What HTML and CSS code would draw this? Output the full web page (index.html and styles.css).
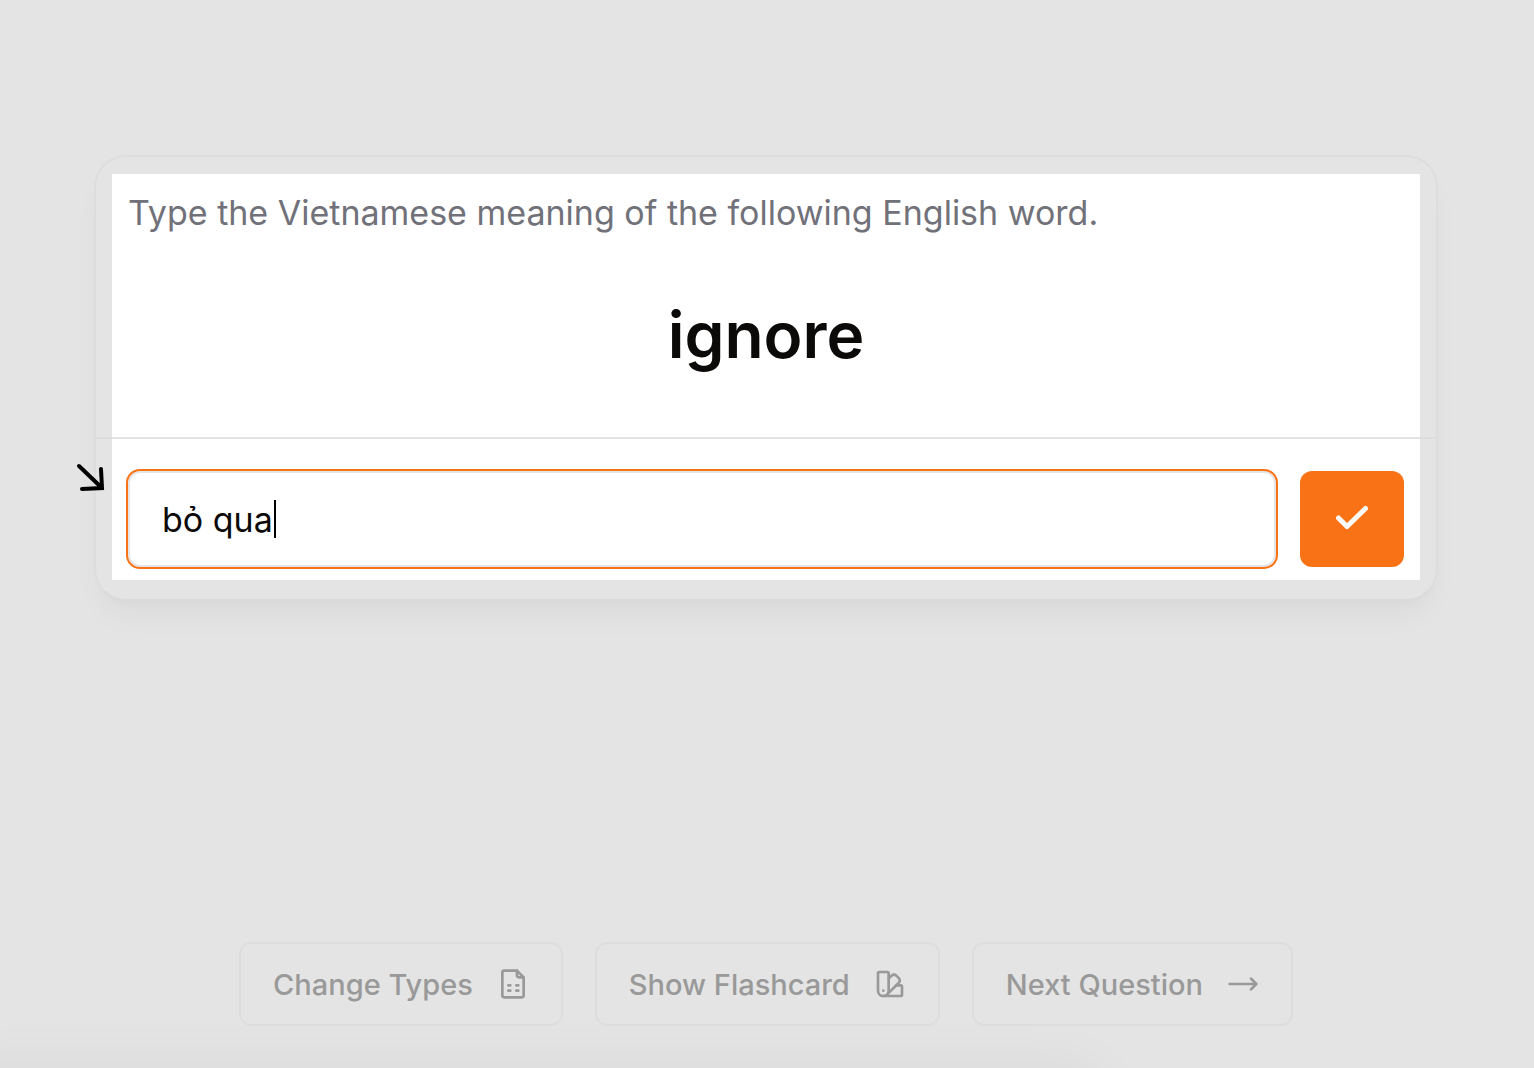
FILE: index.html
```
<!DOCTYPE html>
<html lang="en">
<head>
<meta charset="utf-8">
<meta name="viewport" content="width=device-width, initial-scale=1">
<title>Vocabulary quiz</title>
<link rel="stylesheet" href="styles.css">
</head>
<body>
<main class="page">
  <form class="card">
    <svg class="pointer" viewBox="0 0 32 32" aria-hidden="true"><path d="M4 4 27 26M26 7l1 19-20 1"/></svg>
    <section class="prompt">
      <label class="hint" for="answer">Type the Vietnamese meaning of the following English word.</label>
      <h1 class="word">ignore</h1>
    </section>
    <div class="answer">
      <div class="field">
        <input class="input" id="answer" type="text" value="bỏ qua" autocomplete="off">
        <span class="caret"></span>
      </div>
      <button class="submit" type="submit" aria-label="Check answer">
        <svg class="check" viewBox="0 0 36 28" aria-hidden="true"><path d="M4.500 13l8.500 8.500L31.500 3.500"/></svg>
      </button>
    </div>
  </form>
  <nav class="actions" aria-label="Question actions">
    <button class="action" type="button">Change Types
      <svg class="icon" viewBox="0 0 24 24" aria-hidden="true"><path d="M15 2H5.500A1.500 1.500 0 0 0 4 3.500v17A1.500 1.500 0 0 0 5.500 22h13a1.500 1.500 0 0 0 1.500-1.500V7Z"/><path d="M15 2v3.500A1.500 1.500 0 0 0 16.500 7H20M8.500 13h1.500M14.500 13h1.500M8.500 17h1.500M14.500 17h1.500"/></svg>
    </button>
    <button class="action" type="button">Show Flashcard
      <svg class="icon" viewBox="0 0 24 24" aria-hidden="true"><path d="M11 17a4 4 0 0 1-8 0V4a1 1 0 0 1 1-1h6a1 1 0 0 1 1 1Z"/><path d="M16.7 13H20a1 1 0 0 1 1 1v6a1 1 0 0 1-1 1H7M7 17h.01"/><path d="m11 8 2.3-2.3a2.4 2.4 0 0 1 3.404.004L18.6 7.6a2.4 2.4 0 0 1 .026 3.434L9.9 19.8"/></svg>
    </button>
    <button class="action" type="button">Next Question
      <svg class="icon" viewBox="0 0 24 24" aria-hidden="true"><path d="M18 8l4 4-4 4M2 12h20"/></svg>
    </button>
  </nav>
</main>
</body>
</html>
```
FILE: styles.css
```
* {
  box-sizing: border-box;
}

body {
  margin: 0;
  background: #e4e4e4;
  color: #0c0a09;
  font-family: Inter, "Open Sans", sans-serif;
}

.page {
  position: relative;
  min-height: 100vh;
  overflow: hidden;
  display: flex;
  flex-direction: column;
  justify-content: space-between;
  gap: 64px;
  padding: 155px 96px 42px 94px;
}

/* shadow of the sheet resting just below the viewport */
.page::after {
  content: "";
  position: absolute;
  top: 100%;
  left: -64px;
  right: 28%;
  height: 64px;
  border-radius: 32px;
  box-shadow: 0 0 60px rgba(0, 0, 0, 0.05);
}

.card {
  position: relative;
  z-index: 0;
  border: 2px solid #dddddd;
  border-bottom-color: #dadada;
  border-radius: 32px;
  background: #e4e4e4;
  box-shadow: 0 20px 30px -6px rgba(0, 0, 0, 0.04), 0 8px 12px -8px rgba(0, 0, 0, 0.03);
}

/* highlighted region */
.card::before {
  content: "";
  position: absolute;
  z-index: -1;
  inset: 17px 16px 19px;
  background: #ffffff;
}

.pointer {
  position: absolute;
  top: 305px;
  left: -21px;
  width: 32px;
  height: 32px;
  fill: none;
  stroke: #000000;
  stroke-width: 4;
  stroke-linecap: round;
}

.prompt {
  display: flex;
  flex-direction: column;
  gap: 60px;
  padding: 36px 32px 60px;
}

.hint {
  color: #71717a;
  font-size: 34px;
  line-height: 40px;
}

.word {
  margin: 0;
  font-size: 64px;
  font-weight: 600;
  line-height: 84px;
  text-align: center;
}

.answer {
  display: flex;
  gap: 24px;
  padding: 32px;
  border-top: 2px solid #e4e4e4;
  border-image: linear-gradient(to right, #dddddd 16px, #e4e4e4 16px calc(100% - 16px), #dddddd calc(100% - 16px)) 2 0 0;
}

.field {
  position: relative;
  flex: 1;
}

.input {
  display: block;
  width: 100%;
  height: 96px;
  padding: 0 32px;
  border: 2px solid #e5e5e5;
  border-radius: 12px;
  outline: 2px solid #f97316;
  background: #ffffff;
  color: inherit;
  font-family: inherit;
  font-size: 34px;
}

.caret {
  position: absolute;
  top: 29px;
  left: 146px;
  width: 2px;
  height: 38px;
  background: #000000;
}

.submit {
  display: grid;
  place-items: center;
  width: 104px;
  height: 96px;
  padding: 0;
  border: 0;
  border-radius: 12px;
  background: #f97316;
}

.check {
  width: 36px;
  height: 28px;
  fill: none;
  stroke: #fafafa;
  stroke-width: 5;
  stroke-linecap: round;
  stroke-linejoin: round;
}

.actions {
  display: flex;
  flex-wrap: wrap;
  justify-content: center;
  gap: 32px;
}

.action {
  display: flex;
  align-items: center;
  gap: 24px;
  height: 84px;
  padding: 0 32px;
  border: 2px solid #dddddd;
  border-radius: 12px;
  background: transparent;
  color: #999999;
  font-family: inherit;
  font-size: 29px;
  font-weight: 500;
}

.icon {
  width: 32px;
  height: 32px;
  fill: none;
  stroke: currentColor;
  stroke-width: 2;
  stroke-linecap: round;
  stroke-linejoin: round;
}
```
